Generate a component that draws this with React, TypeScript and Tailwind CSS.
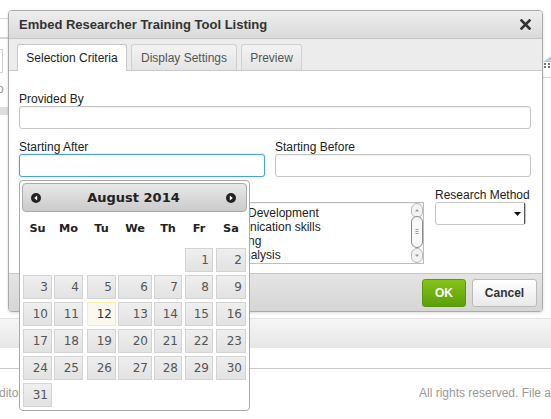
import React from "react";

const weeks: (number | null)[][] = [
  [null, null, null, null, null, 1, 2],
  [3, 4, 5, 6, 7, 8, 9],
  [10, 11, 12, 13, 14, 15, 16],
  [17, 18, 19, 20, 21, 22, 23],
  [24, 25, 26, 27, 28, 29, 30],
  [31, null, null, null, null, null, null],
];
const cellW = ["w-[29px]", "w-[29px]", "w-[29px]", "w-[34px]", "w-[28px]", "w-[28px]", "w-[30px]"];
const dayNames = ["Su", "Mo", "Tu", "We", "Th", "Fr", "Sa"];

function NavIcon({ dir }: { dir: "prev" | "next" }) {
  return (
    <svg width="10" height="10" viewBox="0 0 10 10">
      <circle cx="5" cy="5" r="5" fill="#222" />
      {dir === "prev" ? (
        <path d="M6.2 2.6 L3.2 5 L6.2 7.4 Z" fill="#fff" />
      ) : (
        <path d="M3.8 2.6 L6.8 5 L3.8 7.4 Z" fill="#fff" />
      )}
    </svg>
  );
}

function Scrollbar() {
  return (
    <svg width="12" height="60" viewBox="0 0 12 60" className="shrink-0">
      <rect x="0.5" y="0.5" width="11" height="14" rx="5.5" fill="#f3f3f3" stroke="#b8b8b8" />
      <path d="M4 8.5 L6 6 L8 8.5 Z" fill="#9a9a9a" />
      <rect x="0.5" y="13.5" width="11" height="31" rx="5.5" fill="#f8f8f8" stroke="#8c8c8c" />
      <path d="M4.5 26.5 H7.5 M4.5 28.5 H7.5 M4.5 30.5 H7.5" stroke="#9a9a9a" strokeWidth="1" />
      <rect x="0.5" y="45.5" width="11" height="14" rx="5.5" fill="#f3f3f3" stroke="#b8b8b8" />
      <path d="M4 51.5 L6 54 L8 51.5 Z" fill="#9a9a9a" />
    </svg>
  );
}

function Label({ children }: { children: React.ReactNode }) {
  return <div className="text-[12px] leading-[14px] text-[#222] whitespace-nowrap">{children}</div>;
}

function TextInput({ focus, className = "" }: { focus?: boolean; className?: string }) {
  return (
    <div
      className={
        "h-[23px] rounded-[3px] border bg-white " +
        (focus
          ? "border-[#4d9fe3] shadow-[0_0_2px_rgba(77,159,227,0.5)] "
          : "border-[#c4c4c4] shadow-[inset_0_1px_1px_rgba(0,0,0,0.06)] ") +
        className
      }
    />
  );
}

function DatePicker() {
  return (
    <div className="absolute left-[19px] top-[180px] w-[231px] h-[231px] rounded-[4px] border border-[#aaaaaa] bg-white px-[2px] pt-[2px] font-['DejaVu_Sans',Verdana,sans-serif]">
      <div className="h-[29px] rounded-[4px] border border-[#aaaaaa] bg-gradient-to-b from-[#e8e8e8] to-[#cbcbcb] flex items-center justify-between pl-[8px] pr-[10px]">
        <NavIcon dir="prev" />
        <span className="text-[13px] font-bold text-[#222]">August 2014</span>
        <NavIcon dir="next" />
      </div>
      <div className="ml-[1px] h-[35px] grid grid-cols-[31px_33px_31px_36px_31px_31px_30px] items-center">
        {dayNames.map((d, i) => (
          <div key={d} className={cellW[i] + " text-center text-[11.3px] font-bold text-[#222]"}>
            {d}
          </div>
        ))}
      </div>
      <div className="ml-[1px] mt-[1px] grid grid-cols-[31px_33px_31px_36px_31px_31px_30px] gap-y-[3px]">
        {weeks.flatMap((w, wi) =>
          w.map((d, i) => {
            const key = wi * 7 + i;
            if (d === null) return <div key={key} className="h-[24px]" />;
            const today = d === 12;
            return (
              <div
                key={key}
                className={
                  cellW[i] +
                  " h-[24px] border flex items-center justify-end pr-[3px] text-[12px] " +
                  (today
                    ? "border-[#fcefa1] bg-[#fbf9ee] text-[#363636]"
                    : "border-[#d3d3d3] bg-gradient-to-b from-[#efefef] to-[#e2e2e2] text-[#555555]")
                }
              >
                {d}
              </div>
            );
          })
        )}
      </div>
    </div>
  );
}

function Dialog() {
  return (
    <div className="absolute left-[8px] top-[10px] w-[535px] h-[302px] rounded-[4px] border border-[#aaaaaa] bg-white flex flex-col overflow-hidden shadow-[0_1px_3px_rgba(0,0,0,0.15)]">
      {/* title bar */}
      <div className="h-[28px] shrink-0 flex items-center justify-between pl-[10px] pr-[11px] bg-gradient-to-b from-[#eeeeee] to-[#dadada] border-b border-[#c6c6c6]">
        <span className="text-[13px] font-bold text-[#333]">Embed Researcher Training Tool Listing</span>
        <svg width="11" height="11" viewBox="0 0 11 11">
          <path d="M1.5 1.5 L9.5 9.5 M9.5 1.5 L1.5 9.5" stroke="#333" strokeWidth="2.6" strokeLinecap="square" />
        </svg>
      </div>
      {/* tabs */}
      <div className="h-[32px] shrink-0 flex items-end gap-[4px] pl-[8px] bg-[#ececec] border-b border-[#c8c8c8]">
        <div className="-mb-px h-[27px] w-[110px] flex items-center justify-center rounded-t-[3px] border border-b-0 border-[#c8c8c8] bg-white text-[12px] text-[#222]">
          Selection Criteria
        </div>
        <div className="h-[26px] w-[106px] flex items-center justify-center rounded-t-[3px] border border-b-0 border-[#d0d0d0] bg-gradient-to-b from-[#f3f3f3] to-[#e4e4e4] text-[12px] text-[#555]">
          Display Settings
        </div>
        <div className="h-[26px] w-[61px] flex items-center justify-center rounded-t-[3px] border border-b-0 border-[#d0d0d0] bg-gradient-to-b from-[#f3f3f3] to-[#e4e4e4] text-[12px] text-[#555]">
          Preview
        </div>
      </div>
      {/* content */}
      <div className="flex-1 pl-[10px] pr-[11px] pt-[21px]">
        <Label>Provided By</Label>
        <TextInput />
        <div className="mt-[11px] flex gap-[10px]">
          <div className="w-[246px]">
            <Label>Starting After</Label>
            <TextInput focus />
          </div>
          <div className="flex-1">
            <Label>Starting Before</Label>
            <TextInput />
          </div>
        </div>
        <div className="mt-[11px] flex">
          <div className="w-[178px] mr-[8px]">
            <Label>Category</Label>
            <TextInput />
          </div>
          <div className="flex-1 mr-[11px]">
            <Label>Skills</Label>
            <div className="h-[62px] border border-[#bdbdbd] bg-white flex shadow-[inset_0_1px_1px_rgba(0,0,0,0.06)]">
              <div className="flex-1 pt-[3px] pl-[2px] text-[12px] leading-[14px] text-[#222] whitespace-nowrap overflow-hidden">
                <div>Career Development</div>
                <div>Communication skills</div>
                <div>Mentoring</div>
                <div>Data Analysis</div>
              </div>
              <Scrollbar />
            </div>
          </div>
          <div className="w-[96px]">
            <Label>Research Method</Label>
            <div className="w-[91px] h-[23px] rounded-[3px] border border-[#c4c4c4] bg-white flex items-center justify-end">
              <svg width="7" height="4" viewBox="0 0 7 4" className="mr-[3px]">
                <path d="M0 0 H7 L3.5 4 Z" fill="#111" />
              </svg>
              <div className="w-px h-[21px] bg-[#555]" />
            </div>
          </div>
        </div>
      </div>
      {/* footer */}
      <div className="h-[38px] shrink-0 border-t border-[#c6c6c6] bg-gradient-to-b from-[#e4e4e4] to-[#d6d6d6] flex justify-end items-start pt-[5px] pr-[5px] gap-[6px]">
        <div className="w-[44px] h-[28px] rounded-[3px] border border-[#58980c] bg-gradient-to-b from-[#86c21a] to-[#5c9f08] flex items-center justify-center text-[12px] font-bold text-white">
          OK
        </div>
        <div className="w-[65px] h-[28px] rounded-[3px] border border-[#bbbbbb] bg-gradient-to-b from-[#ffffff] to-[#e9e9e9] flex items-center justify-center text-[12px] font-bold text-[#333]">
          Cancel
        </div>
      </div>
    </div>
  );
}

export default function App() {
  return (
    <div className="relative w-[551px] h-[419px] overflow-hidden bg-white font-['Liberation_Sans',Arial,sans-serif]">
      {/* background page */}
      <div className="flex flex-col">
        <div className="h-[318px] flex justify-between">
          <div className="w-[8px] flex flex-col">
            <div className="mt-[18px] h-[20px] w-[14px] rounded-tr-[6px] border border-l-0 border-[#d6d6d6]" />
            <div className="h-px bg-[#d6d6d6]" />
            <div className="mt-[10px] h-[24px] w-[3px] border-r border-y border-[#d2d2d2]" />
            <div className="mt-[10px] text-[12px] leading-[12px] text-[#999] -ml-[3px]">o</div>
            <div className="mt-[12px] h-[8px] bg-[#dedede]" />
          </div>
          <div className="w-[8px] flex flex-col">
            <div className="mt-[56px] h-[12px] flex flex-col items-end">
              <svg width="8" height="12" viewBox="0 0 8 12">
                <path d="M0 6 L8 0 V6 Z" fill="#b9cbe0" />
                <rect x="1" y="7" width="2" height="2" fill="#777" />
                <rect x="5" y="7" width="2" height="2" fill="#777" />
                <rect x="1" y="10" width="2" height="2" fill="#777" />
                <rect x="5" y="10" width="2" height="2" fill="#777" />
              </svg>
            </div>
            <div className="mt-[9px] h-px bg-[#d6d6d6]" />
          </div>
        </div>
        <div className="h-[30px] border-t border-[#e2e2e2] bg-gradient-to-b from-[#f6f6f6] to-[#e7e7e7]" />
        <div className="h-[21px] border-b border-[#c8c8c8]" />
        <div className="mt-[17px] flex justify-between text-[12px] leading-[14px] text-[#999] whitespace-nowrap">
          <span className="-ml-[9px]">Editor</span>
          <span className="w-[132px] overflow-hidden">All rights reserved. File a</span>
        </div>
      </div>
      <Dialog />
      <DatePicker />
    </div>
  );
}
